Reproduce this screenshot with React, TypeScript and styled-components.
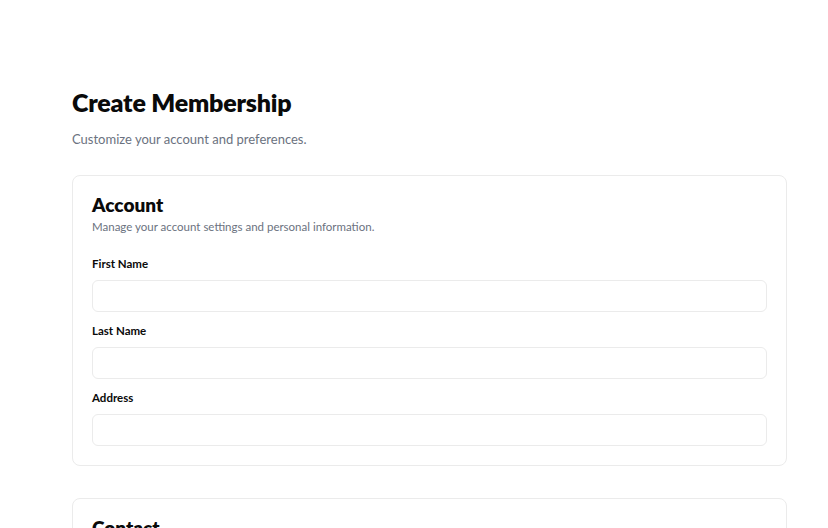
import styled, { createGlobalStyle } from "styled-components";

const GlobalStyle = createGlobalStyle`
  * { box-sizing: border-box; }
  body {
    margin: 0;
    background: #ffffff;
    font-family: Lato, "Noto Sans", Arial, sans-serif;
    color: #0a0a0a;
  }
`;

const sections = [
  {
    title: "Account",
    description: "Manage your account settings and personal information.",
    fields: ["First Name", "Last Name", "Address"],
  },
  {
    title: "Contact",
    description: "How we can reach you.",
    fields: ["Email", "Phone"],
  },
];

const Page = styled.main`
  padding: 86px 41px 40px 72px;
`;

const Title = styled.h1`
  margin: 0;
  font-size: 25px;
  line-height: 32px;
  font-weight: 800;
  letter-spacing: -0.2px;
`;

const Subtitle = styled.p`
  margin: 11px 0 0;
  font-size: 13px;
  line-height: 20px;
  color: #6b7280;
`;

const Stack = styled.div`
  margin-top: 26px;
  display: flex;
  flex-direction: column;
  gap: 32px;
`;

const Card = styled.section`
  border: 1px solid #ebebeb;
  border-radius: 8px;
  padding: 17px 19px 19px;
`;

const CardTitle = styled.h2`
  margin: 0;
  font-size: 19px;
  line-height: 24px;
  font-weight: 800;
`;

const CardDescription = styled.p`
  margin: 2px 0 0;
  font-size: 11.5px;
  line-height: 16px;
  color: #6b7280;
`;

const Fields = styled.div`
  margin-top: 21px;
  display: flex;
  flex-direction: column;
  gap: 11px;
`;

const Field = styled.label`
  display: flex;
  flex-direction: column;
  gap: 8px;
`;

const LabelText = styled.span`
  font-size: 11.5px;
  line-height: 16px;
  font-weight: 700;
  color: #0a0a0a;
`;

const Input = styled.input`
  height: 32px;
  width: 100%;
  border: 1px solid #ebebeb;
  border-radius: 6px;
  padding: 0 10px;
  font: inherit;
  font-size: 13px;
  background: #ffffff;
  outline: none;
`;

export default function App() {
  return (
    <>
      <GlobalStyle />
      <Page>
        <Title>Create Membership</Title>
        <Subtitle>Customize your account and preferences.</Subtitle>
        <Stack>
          {sections.map((section) => (
            <Card key={section.title}>
              <CardTitle>{section.title}</CardTitle>
              <CardDescription>{section.description}</CardDescription>
              <Fields>
                {section.fields.map((field) => (
                  <Field key={field}>
                    <LabelText>{field}</LabelText>
                    <Input type="text" />
                  </Field>
                ))}
              </Fields>
            </Card>
          ))}
        </Stack>
      </Page>
    </>
  );
}
